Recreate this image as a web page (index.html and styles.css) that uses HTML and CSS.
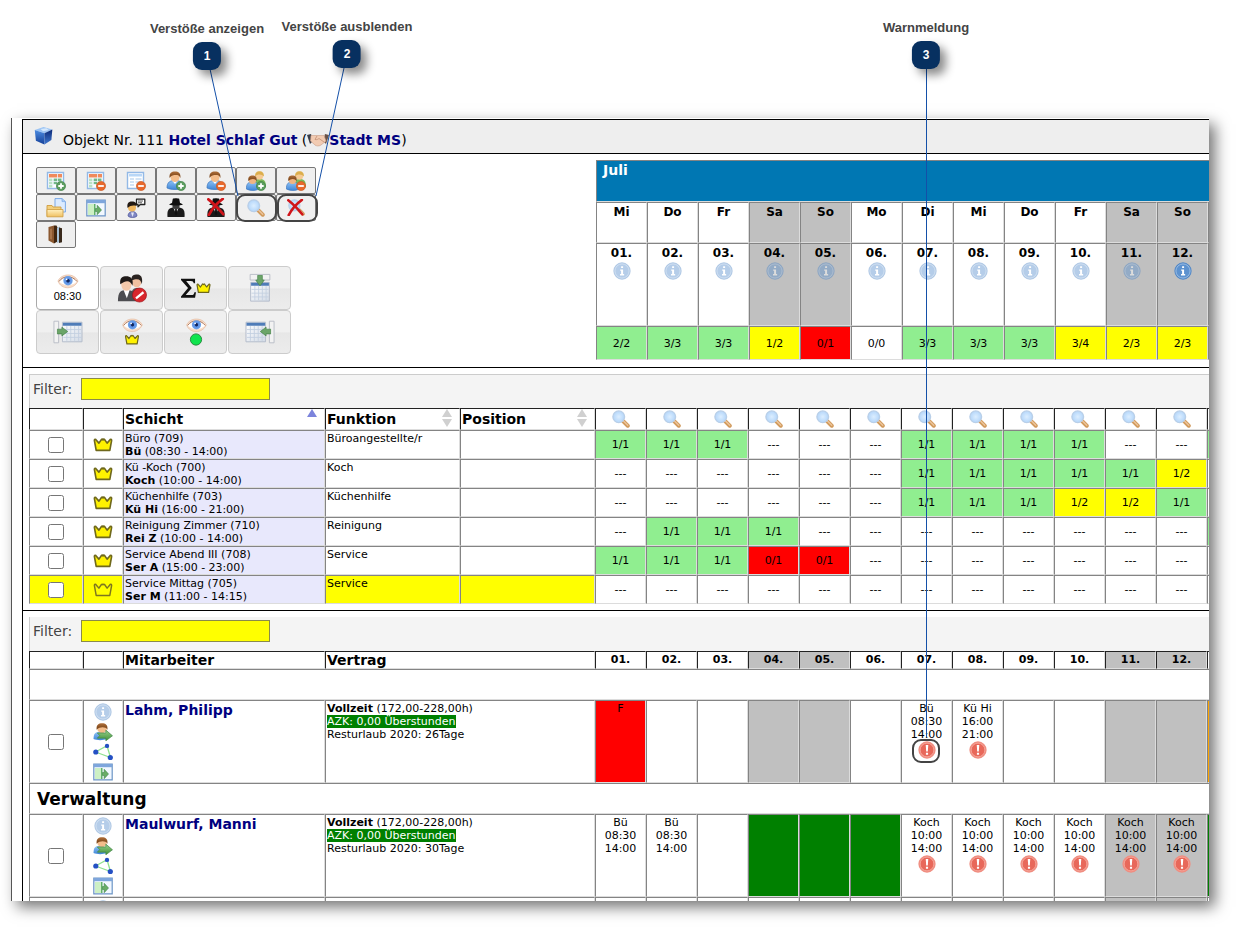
FILE: index.html
```html
<!DOCTYPE html>
<html lang="de">
<head>
<meta charset="utf-8">
<title>Dienstplan – Hotel Schlaf Gut</title>
<link rel="stylesheet" href="styles.css">
</head>
<body>
<svg class="defs" aria-hidden="true">
  <defs>
    <linearGradient id="g-blue" x1="0" y1="0" x2="0" y2="1"><stop offset="0" stop-color="#8fc2f5"/><stop offset="1" stop-color="#3f86d8"/></linearGradient>
    <linearGradient id="g-green" x1="0" y1="0" x2="0" y2="1"><stop offset="0" stop-color="#9ad18c"/><stop offset="1" stop-color="#3f9038"/></linearGradient>
    <linearGradient id="g-hair" x1="0" y1="0" x2="0" y2="1"><stop offset="0" stop-color="#b0703a"/><stop offset="1" stop-color="#6e3b12"/></linearGradient>
    <linearGradient id="g-folder" x1="0" y1="0" x2="0" y2="1"><stop offset="0" stop-color="#fff0c0"/><stop offset="1" stop-color="#f0c060"/></linearGradient>
    <linearGradient id="g-cube-l" x1="0" y1="0" x2="0" y2="1"><stop offset="0" stop-color="#4c8be0"/><stop offset="1" stop-color="#143f98"/></linearGradient>
    <linearGradient id="g-cube-r" x1="0" y1="0" x2="0" y2="1"><stop offset="0" stop-color="#0d2a78"/><stop offset="1" stop-color="#3f78d0"/></linearGradient>
    <radialGradient id="g-lens"><stop offset="0" stop-color="#dceeff"/><stop offset="1" stop-color="#b4d6fa"/></radialGradient>
    <radialGradient id="g-iris"><stop offset="0" stop-color="#0e1f4c"/><stop offset=".3" stop-color="#16306e"/><stop offset=".45" stop-color="#5b8fe4"/><stop offset="1" stop-color="#6fa4ea"/></radialGradient>
    <linearGradient id="g-sheet" x1="0" y1="0" x2="1" y2="1"><stop offset="0" stop-color="#fff"/><stop offset="1" stop-color="#d3dbe6"/></linearGradient>
  </defs>
  <symbol id="plus" viewBox="0 0 10 10"><circle cx="5" cy="5" r="4.6" fill="#5c9e60" stroke="#3c7d42" stroke-width=".6"/><path d="M5 2.300v5.400M2.300 5h5.400" stroke="#fff" stroke-width="1.800"/></symbol>
  <symbol id="minus" viewBox="0 0 10 10"><circle cx="5" cy="5" r="4.6" fill="#e8682c" stroke="#c8581f" stroke-width=".6"/><path d="M2.200 5h5.600" stroke="#fff" stroke-width="1.800"/></symbol>
  <symbol id="cal" viewBox="0 0 20 20"><path d="M1.500 1.500h16v16h-16z" fill="#fff" stroke="#93b9e6" stroke-width="1.400"/><path d="M3 3h13v3.500H3z" fill="#f08a5c"/><path d="M3 7.500h3.500v9H3z" fill="#b9e2c4"/><path d="M7.500 7.500h8v6h-8z" fill="#74b88a"/><path d="M3 10.500h13M3 13.500h13M7 7v10M11.500 3v14" stroke="#eef5fc" stroke-width=".8"/></symbol>
  <symbol id="cal2" viewBox="0 0 20 20"><path d="M1.500 1.500h16v16h-16z" fill="#fff" stroke="#93b9e6" stroke-width="1.400"/><path d="M3 3h13v2.500H3z" fill="#b9d7f7"/><path d="M4 8h4M4 11h4M4 14h4M9.500 8h6M9.500 11h6" stroke="#a6c8ec" stroke-width="1.200"/></symbol>
  <symbol id="user" viewBox="0 0 20 20"><path d="M1 17c0-6 3-7.500 8-7.500s8 1.500 8 7.500c-4 2-12 2-16 0z" fill="url(#g-blue)" stroke="#3a74bb" stroke-width=".7"/><path d="M6.500 10L9 13l2.500-3z" fill="#fff"/><ellipse cx="9" cy="6.500" rx="4.400" ry="4.500" fill="#f4bd8b"/><path d="M3.600 7C3 2 5.500.4 9 .4S15 2 14.400 7C13.400 4.500 12 4 10 4 7.500 4 5.600 4 3.600 7z" fill="url(#g-hair)"/></symbol>
  <symbol id="users" viewBox="0 0 20 20"><path d="M8 15c0-6 2-7 6-7s6 2 6 8c-3 2-9 2-12-1z" fill="#79b95a"/><circle cx="13.500" cy="5" r="3.700" fill="#f6ca93"/><path d="M9 5.500C9 1.500 11 .2 13.500.2S18 1.500 18 5.500c-2-2-6-3-9 0z" fill="#dcae4c"/><path d="M.3 18c0-6 2.400-7 6.200-7s6.200 1 6.200 7c-3 2-8 2-12.400 0z" fill="url(#g-blue)" stroke="#3a74bb" stroke-width=".6"/><circle cx="6.500" cy="9.500" r="3.600" fill="#f0b482"/><path d="M2.300 10c-.4-4.500 1.500-5.600 4.200-5.600s4.600 1.100 4.200 5.600c-1.800-2.800-5.800-2.800-8.400 0z" fill="url(#g-hair)"/></symbol>
  <symbol id="folder" viewBox="0 0 20 20"><path d="M9 .6h7l3.400 3V14H9z" fill="#dcebff" stroke="#6fa2e4" stroke-width=".9"/><path d="M16 .6v3h3.400" fill="#a9cbf5" stroke="#6fa2e4" stroke-width=".6"/><path d="M1 18.500V7.500h5l1 1.500h8v3" fill="#f3cf7c" stroke="#cf9c3e" stroke-width=".9"/><path d="M1 18.800V11.500h16v7.300z" fill="url(#g-folder)" stroke="#d3a348" stroke-width=".9"/></symbol>
  <symbol id="door" viewBox="0 0 20 18"><path d="M.8 1.200h18.400v15.600H.8z" fill="#f2f8ff" stroke="#6c95c6" stroke-width="1.200"/><path d="M.8 1h18.400v3.200H.8z" fill="#7ea6dc"/><path d="M2 5h6v11H2z" fill="#cdf0c4"/><path d="M8 5h1.500v11H8z" fill="#63b06a"/><path d="M9.500 9.500h1.700V6.300l4.300 4.700-4.300 4.700v-3.200H9.500z" fill="#69ad66" stroke="#3c8444" stroke-width=".6"/></symbol>
  <symbol id="talk" viewBox="0 0 20 20"><path d="M10.500 1.200h8.300v5.300h-4.500l-2.300 2.300V6.500h-1.500z" fill="#fff" stroke="#222" stroke-width="1.300" stroke-linejoin="round"/><path d="M12 3h5M12 4.800h4" stroke="#444" stroke-width=".9"/><path d="M2 18c0-6 9-6 9 0-2 2-7 2-9 0z" fill="#8088c4" stroke="#4a5298" stroke-width=".7"/><path d="M5 14.500l1.500 4.500 1.500-4.500z" fill="#e6e8f8"/><circle cx="6" cy="9.500" r="4" fill="#f0b860"/><path d="M1.600 10C.6 5 3 3.600 6 3.600c3.300 0 5 1.600 4.500 4.400C7 7 4.500 7.500 1.600 10z" fill="#231a14"/></symbol>
  <symbol id="spy" viewBox="0 0 20 20"><path d="M1.500 19c-.5-6 .5-8.500 5-9.500h7c4.500 1 5.500 3.500 5 9.500z" fill="#1b1b1b"/><path d="M7.500 10l2.500 6 2.500-6z" fill="#ddd"/><path d="M9.200 11h1.600l.4 5-1.200 1.500L8.800 16z" fill="#111"/><path d="M6.500 5.500h7V9c-1 3-6 3-7 0z" fill="#3c3c3c"/><path d="M3 6.500C5 5.300 6 5 6 5l.8-4.200c1-.8 5.400-.8 6.400 0L14 5s1 .3 3 1.500c-3 1.400-11 1.400-14 0z" fill="#101010"/></symbol>
  <symbol id="cross" viewBox="0 0 20 20"><path d="M1.500 1.500C6 5 13 12 18 18M17.500 1C12 5 5 13 2 19" stroke="#d0141a" stroke-width="3" fill="none" stroke-linecap="round"/></symbol>
  <symbol id="mag" viewBox="0 0 20 20"><path d="M12.500 12.500l5 5" stroke="#d19a5c" stroke-width="4.400" stroke-linecap="round"/><path d="M12.500 12l5 5" stroke="#ecc49a" stroke-width="1.600" stroke-linecap="round"/><circle cx="7.500" cy="7.500" r="6.500" fill="url(#g-lens)" stroke="#b9cfe8" stroke-width="1.500"/></symbol>
  <symbol id="book" viewBox="0 0 20 20"><path d="M2.500 2l5.500-1.500v18l-5.500-3z" fill="#8b5830"/><path d="M8 .5h2.500l1 2v14L8 18.500z" fill="#41260f"/><path d="M11 3l3-1.500V17l-3 1z" fill="#a9c3d8"/><path d="M13 2.500l3 .8v14L13 18z" fill="#3a2a1c"/><path d="M4 4l2-.5v11L4 14z" fill="#a8744a"/></symbol>
  <symbol id="eye" viewBox="0 0 22 16"><path d="M1 8C4 .5 17-.5 21 8c-4 9-17 9-20 0z" fill="#f8ddca" stroke="#e6bfa6" stroke-width=".8"/><path d="M2 8.500C6 2.500 15 2 20 8.500c-5 5-13 5-18 0z" fill="#fff"/><path d="M2 8.500C6 2.500 15 2 20 8.500" fill="none" stroke="#a9775c" stroke-width="1"/><circle cx="11" cy="7.800" r="4.700" fill="url(#g-iris)"/><circle cx="9.600" cy="6.300" r=".9" fill="#fff"/></symbol>
  <symbol id="crown" viewBox="0 0 22 16"><path d="M3.500 14.500L1.500 3.500c0-1.500 1.500-1.500 2-.5l3 3.500 2.800-4c.5-.6 1-.6 1.700.5.700-1.100 1.200-1.100 1.700-.5l2.800 4 3-3.500c.5-1 2-1 2 .5l-2 11z" fill="#fff200" stroke="#6f681c" stroke-width="1.800" stroke-linejoin="round"/></symbol>
  <symbol id="crown-line" viewBox="0 0 22 16"><path d="M3.500 14.500L1.500 3.500c0-1.500 1.500-1.500 2-.5l3 3.500 2.800-4c.5-.6 1-.6 1.700.5.700-1.100 1.200-1.100 1.700-.5l2.800 4 3-3.500c.5-1 2-1 2 .5l-2 11z" fill="#ff0" stroke="#7d7620" stroke-width="1.600" stroke-linejoin="round"/></symbol>
  <symbol id="info" viewBox="0 0 20 20"><circle cx="10" cy="10" r="9.600" fill="#4f86c6"/><circle cx="10" cy="10" r="7.900" fill="#5d92cf" stroke="#a9c7e8" stroke-width=".9"/><path d="M9 4.600h2.200v2.200H9zM8 8.200h3.200v5.200h1.200V15H7.800v-1.600H9V9.800H8z" fill="#fff"/></symbol>
  <symbol id="warn" viewBox="0 0 20 20"><circle cx="10" cy="10" r="9.600" fill="#f08d80"/><circle cx="10" cy="10" r="7.600" fill="#e8685a" stroke="#f5aa9e" stroke-width=".9"/><path d="M8.600 4.500h2.800l-.5 7.300H9.100zM8.800 13h2.400v2.300H8.800z" fill="#fff"/></symbol>
  <symbol id="userarrow" viewBox="0 0 20 19"><path d="M0 17c0-6 2-7.500 6-7.500s8 1.500 8 7.500c-4 1.500-10 1.500-14 0z" fill="url(#g-blue)"/><ellipse cx="9" cy="6" rx="5" ry="4.700" fill="#f4bd8b"/><path d="M3.300 7C2.800 2 5.300.3 9 .3S15.200 2 14.700 7C13 4 7 3.600 3.300 7z" fill="url(#g-hair)"/><path d="M4 10.500h9V7.500l7 6-7 5.300V16H4l2.500-2.700z" fill="url(#g-green)" stroke="#3c8444" stroke-width=".7"/></symbol>
  <symbol id="net" viewBox="0 0 20 17"><path d="M2.500 8.500L14 2.200 17.500 14z" fill="none" stroke="#8fe08f" stroke-width="1.300"/><circle cx="2.800" cy="8.500" r="2.600" fill="#2450c4"/><circle cx="14" cy="2.400" r="2.200" fill="#2450c4"/><circle cx="17.300" cy="14" r="2.600" fill="#2450c4"/></symbol>
  <symbol id="sheet" viewBox="0 0 22 22"><path d="M1 1h20v20H1z" fill="url(#g-sheet)" stroke="#b4bccb"/><path d="M1.500 1.500h19v3h-19z" fill="#4f7cb8"/><path d="M2 8.500h18M2 12.500h18M2 16.500h18M5.500 5v15M9.500 5v15M13.500 5v15M17.500 5v15" stroke="#c3cfe0" stroke-width=".9"/></symbol>
  <symbol id="arrow" viewBox="0 0 12 10"><path d="M.5 2.500h5V.3L11.700 5l-6.200 4.700V7.500h-5z" fill="#6ba568" stroke="#44804a" stroke-width=".7"/></symbol>
</svg>

<main class="figure">
  <section class="shot">
    <div class="frame">
      <header class="title">
        <svg class="cube" viewBox="0 0 20 20"><path d="M.8 4.300L10 1l9.300 2.800L11 7.500z" fill="#9cc4f4"/><path d="M.8 4.300L11 7.500v12L2 15.500z" fill="url(#g-cube-l)"/><path d="M11 7.500l8.300-3.700-1 11L11 19.500z" fill="url(#g-cube-r)"/><path d="M7 3.200l6-.8 2.500 1.800-6 1.200z" fill="#d5e8fc"/></svg>
        <h1>Objekt Nr. 111 <a href="#objekt">Hotel Schlaf Gut</a> (<svg class="shake" viewBox="0 0 22 14"><path d="M0 2l4-1 2 7-3 3z" fill="#3a3f4a"/><path d="M22 2l-4-1-2 7 3 3z" fill="#6b5348"/><path d="M4 2.500h13l2 5.500-5 4c-2 1.500-5 1-6 0L3.500 8z" fill="#f2cbb2" stroke="#c99c84" stroke-width=".6"/><path d="M10 3L8 6.500c2 .6 3-.5 4-1l5 3.500" fill="none" stroke="#c08e74" stroke-width=".8"/></svg><a href="#mandant">Stadt MS</a>)</h1>
      </header>

      <section class="panel top">
        <div class="tools">
          <div class="small">
            <button aria-label="Kalender hinzufügen"><svg viewBox="0 0 20 20"><use href="#cal"/><use href="#plus" x="10" y="10" width="10" height="10"/></svg></button>
            <button aria-label="Kalender entfernen"><svg viewBox="0 0 20 20"><use href="#cal"/><use href="#minus" x="10" y="10" width="10" height="10"/></svg></button>
            <button aria-label="Zeile entfernen"><svg viewBox="0 0 20 20"><use href="#cal2"/><use href="#minus" x="10" y="10" width="10" height="10"/></svg></button>
            <button aria-label="Mitarbeiter hinzufügen"><svg viewBox="0 0 20 20"><use href="#user"/><use href="#plus" x="10" y="10" width="10" height="10"/></svg></button>
            <button aria-label="Mitarbeiter entfernen"><svg viewBox="0 0 20 20"><use href="#user"/><use href="#minus" x="10" y="10" width="10" height="10"/></svg></button>
            <button aria-label="Gruppe hinzufügen"><svg viewBox="0 0 20 20"><use href="#users"/><use href="#plus" x="10" y="10" width="10" height="10"/></svg></button>
            <button aria-label="Gruppe entfernen"><svg viewBox="0 0 20 20"><use href="#users"/><use href="#minus" x="10" y="10" width="10" height="10"/></svg></button>
            <button aria-label="Ordner"><svg viewBox="0 0 20 20"><use href="#folder"/></svg></button>
            <button aria-label="Öffnen"><svg viewBox="0 0 20 20"><use href="#door" y="1" width="20" height="18"/></svg></button>
            <button aria-label="Nachricht"><svg viewBox="0 0 20 20"><use href="#talk"/></svg></button>
            <button aria-label="Agent"><svg viewBox="0 0 20 20"><use href="#spy"/></svg></button>
            <button aria-label="Agent entfernen"><svg viewBox="0 0 20 20"><use href="#spy"/><use href="#cross" x="1" width="18" height="18"/></svg></button>
            <button aria-label="Verstöße anzeigen"><svg viewBox="0 0 20 20"><use href="#mag" x="1" y="1" width="18" height="18"/></svg></button>
            <button aria-label="Verstöße ausblenden"><svg viewBox="0 0 20 20"><use href="#mag" x="2" y="1" width="17" height="17"/><use href="#cross" x="1" y="1" width="17" height="17"/></svg></button>
            <button aria-label="Buch"><svg viewBox="0 0 20 20"><use href="#book"/></svg></button>
          </div>
          <div class="big">
            <button class="on"><svg class="eye" viewBox="0 0 22 16"><use href="#eye"/></svg>08:30</button>
            <button aria-label="Personen sperren"><svg viewBox="0 0 32 32"><path d="M14 27c1-10 4-11 8-11s8 2 8 8z" fill="#5a5a5c"/><ellipse cx="21" cy="9" rx="5" ry="6.500" fill="#f0c0a0"/><path d="M15.500 8C15 2 18 1.500 21.500 1.500S28 4 26.500 12c-1-5-4-7-11-4z" fill="#2a2320"/><path d="M1 30c0-10 3-12 9-12s11 2 11 12z" fill="#4c4c50"/><path d="M7 18l3.500 9 3-9z" fill="#fff"/><ellipse cx="10" cy="12" rx="5.500" ry="7" fill="#f3c8aa"/><path d="M3.500 12C2.500 5 6 3.500 10 3.500s8 2 6.500 10c-2-5-6-7-13-1.500z" fill="#1f1a18"/><circle cx="24" cy="23.500" r="7.500" fill="#d8262c" stroke="#9c1218" stroke-width=".7"/><path d="M19.500 26l8-6.500 1.500 2-8 6.500z" fill="#fff"/></svg></button>
            <button aria-label="Summe"><svg viewBox="0 0 32 32"><path d="M0 6h15v5h-1.500c-.3-1.800-1-2.500-3-2.500H5.500L11.500 16 5 23.500h6.500c1.600 0 2.400-.9 2.800-3H16L15 26.500H0V25l7.500-9L0 7.500z" fill="#111"/><use href="#crown" x="16" y="10" width="16" height="12"/></svg></button>
            <button aria-label="Tabelle oben"><svg viewBox="0 0 32 32"><use href="#sheet" x="5" y="9" width="22" height="22"/><path d="M5.500 1.500h21v6h-21z" fill="#f2f2f2" stroke="#b9bdc6"/><g transform="rotate(90 16 8)"><use href="#arrow" x="10" y="3" width="12" height="10"/></g></svg></button>
            <button aria-label="Tabelle links"><svg viewBox="0 0 32 32"><use href="#sheet" x="9" y="4" width="23" height="24"/><path d="M1 4.500h5v23H1z" fill="#f2f2f2" stroke="#b9bdc6"/><use href="#arrow" x="4" y="10" width="12" height="11"/></svg></button>
            <button aria-label="Kronen anzeigen"><svg viewBox="0 0 32 32"><use href="#eye" x="5" y="0" width="23" height="17"/><use href="#crown" x="8" y="18" width="16" height="12"/></svg></button>
            <button aria-label="Status anzeigen"><svg viewBox="0 0 32 32"><use href="#eye" x="5" y="0" width="23" height="17"/><circle cx="16" cy="24" r="6" fill="#0fe44d" stroke="#26853c"/></svg></button>
            <button aria-label="Tabelle rechts"><svg viewBox="0 0 32 32"><use href="#sheet" x="0" y="4" width="23" height="24"/><path d="M26 4.500h5v23h-5z" fill="#f2f2f2" stroke="#b9bdc6"/><g transform="rotate(180 22 16)"><use href="#arrow" x="16" y="11" width="12" height="11"/></g></svg></button>
          </div>
        </div>
        <table class="grid calendar">
          <colgroup><col class="day" span="13"></colgroup>
          <tr class="month"><th colspan="13">Juli</th></tr>
          <tr class="weekday"><th>Mi</th><th>Do</th><th>Fr</th><th class="we">Sa</th><th class="we">So</th><th>Mo</th><th>Di</th><th>Mi</th><th>Do</th><th>Fr</th><th class="we">Sa</th><th class="we">So</th><th></th></tr>
          <tr class="date"><th>01.<svg class="i18 dim"><use href="#info"/></svg></th><th>02.<svg class="i18 dim"><use href="#info"/></svg></th><th>03.<svg class="i18 dim"><use href="#info"/></svg></th><th class="we">04.<svg class="i18 dim"><use href="#info"/></svg></th><th class="we">05.<svg class="i18 dim"><use href="#info"/></svg></th><th>06.<svg class="i18 dim"><use href="#info"/></svg></th><th>07.<svg class="i18 dim"><use href="#info"/></svg></th><th>08.<svg class="i18 dim"><use href="#info"/></svg></th><th>09.<svg class="i18 dim"><use href="#info"/></svg></th><th>10.<svg class="i18 dim"><use href="#info"/></svg></th><th class="we">11.<svg class="i18 dim"><use href="#info"/></svg></th><th class="we">12.<svg class="i18"><use href="#info"/></svg></th><th></th></tr>
          <tr class="sum"><td class="ok">2/2</td><td class="ok">3/3</td><td class="ok">3/3</td><td class="part">1/2</td><td class="none">0/1</td><td>0/0</td><td class="ok">3/3</td><td class="ok">3/3</td><td class="ok">3/3</td><td class="part">3/4</td><td class="part">2/3</td><td class="part">2/3</td><td></td></tr>
        </table>
      </section>

      <section class="panel">
        <div class="filter lined"><label for="f1">Filter:</label><input id="f1" type="text"></div>
        <table class="grid shifts">
          <colgroup><col class="c-check"><col class="c-icon"><col class="c-name"><col class="c-half"><col class="c-half"><col class="day" span="13"></colgroup>
          <tr class="head"><th></th><th></th>
            <th><div class="sort">Schicht<svg class="asc" viewBox="0 0 10 18"><path d="M5 0l5 8H0z" fill="#7c84dc"/></svg></div></th>
            <th><div class="sort">Funktion<svg viewBox="0 0 10 18"><path d="M5 0l5 8H0zM5 18l5-8H0z" fill="#d0d0d0"/></svg></div></th>
            <th><div class="sort">Position<svg viewBox="0 0 10 18"><path d="M5 0l5 8H0zM5 18l5-8H0z" fill="#d0d0d0"/></svg></div></th>
            <th><svg class="i18"><use href="#mag"/></svg></th><th><svg class="i18"><use href="#mag"/></svg></th><th><svg class="i18"><use href="#mag"/></svg></th><th><svg class="i18"><use href="#mag"/></svg></th><th><svg class="i18"><use href="#mag"/></svg></th><th><svg class="i18"><use href="#mag"/></svg></th><th><svg class="i18"><use href="#mag"/></svg></th><th><svg class="i18"><use href="#mag"/></svg></th><th><svg class="i18"><use href="#mag"/></svg></th><th><svg class="i18"><use href="#mag"/></svg></th><th><svg class="i18"><use href="#mag"/></svg></th><th><svg class="i18"><use href="#mag"/></svg></th><th></th></tr>
          <tr><td><input type="checkbox" aria-label="Büro"></td><td><svg class="crown"><use href="#crown"/></svg></td><td class="txt name">Büro (709)<br><b>Bü</b> (08:30 - 14:00)</td><td class="txt">Büroangestellte/r</td><td class="txt"></td><td class="ok">1/1</td><td class="ok">1/1</td><td class="ok">1/1</td><td>---</td><td>---</td><td>---</td><td class="ok">1/1</td><td class="ok">1/1</td><td class="ok">1/1</td><td class="ok">1/1</td><td>---</td><td>---</td><td class="ok"></td></tr>
          <tr><td><input type="checkbox" aria-label="Kü -Koch"></td><td><svg class="crown"><use href="#crown"/></svg></td><td class="txt name">Kü -Koch (700)<br><b>Koch</b> (10:00 - 14:00)</td><td class="txt">Koch</td><td class="txt"></td><td>---</td><td>---</td><td>---</td><td>---</td><td>---</td><td>---</td><td class="ok">1/1</td><td class="ok">1/1</td><td class="ok">1/1</td><td class="ok">1/1</td><td class="ok">1/1</td><td class="part">1/2</td><td></td></tr>
          <tr><td><input type="checkbox" aria-label="Küchenhilfe"></td><td><svg class="crown"><use href="#crown"/></svg></td><td class="txt name">Küchenhilfe (703)<br><b>Kü Hi</b> (16:00 - 21:00)</td><td class="txt">Küchenhilfe</td><td class="txt"></td><td>---</td><td>---</td><td>---</td><td>---</td><td>---</td><td>---</td><td class="ok">1/1</td><td class="ok">1/1</td><td class="ok">1/1</td><td class="part">1/2</td><td class="part">1/2</td><td class="ok">1/1</td><td></td></tr>
          <tr><td><input type="checkbox" aria-label="Reinigung Zimmer"></td><td><svg class="crown"><use href="#crown"/></svg></td><td class="txt name">Reinigung Zimmer (710)<br><b>Rei Z</b> (10:00 - 14:00)</td><td class="txt">Reinigung</td><td class="txt"></td><td>---</td><td class="ok">1/1</td><td class="ok">1/1</td><td class="ok">1/1</td><td>---</td><td>---</td><td>---</td><td>---</td><td>---</td><td>---</td><td>---</td><td>---</td><td class="ok"></td></tr>
          <tr><td><input type="checkbox" aria-label="Service Abend III"></td><td><svg class="crown"><use href="#crown"/></svg></td><td class="txt name">Service Abend III (708)<br><b>Ser A</b> (15:00 - 23:00)</td><td class="txt">Service</td><td class="txt"></td><td class="ok">1/1</td><td class="ok">1/1</td><td class="ok">1/1</td><td class="none">0/1</td><td class="none">0/1</td><td>---</td><td>---</td><td>---</td><td>---</td><td>---</td><td>---</td><td>---</td><td></td></tr>
          <tr><td class="part"><input type="checkbox" aria-label="Service Mittag"></td><td class="part"><svg class="crown"><use href="#crown-line"/></svg></td><td class="txt name">Service Mittag (705)<br><b>Ser M</b> (11:00 - 14:15)</td><td class="txt part">Service</td><td class="txt part"></td><td>---</td><td>---</td><td>---</td><td>---</td><td>---</td><td>---</td><td>---</td><td>---</td><td>---</td><td>---</td><td>---</td><td>---</td><td></td></tr>
        </table>
      </section>

      <section class="panel">
        <div class="filter"><label for="f2">Filter:</label><input id="f2" type="text"></div>
        <table class="grid staff">
          <colgroup><col class="c-check"><col class="c-icon"><col class="c-name"><col class="c-wide"><col class="day" span="13"></colgroup>
          <tr class="head"><th></th><th></th><th class="left">Mitarbeiter</th><th class="left">Vertrag</th><th class="num">01.</th><th class="num">02.</th><th class="num">03.</th><th class="num we">04.</th><th class="num we">05.</th><th class="num">06.</th><th class="num">07.</th><th class="num">08.</th><th class="num">09.</th><th class="num">10.</th><th class="num we">11.</th><th class="num we">12.</th><th></th></tr>
          <tr class="group"><th colspan="17"></th></tr>
          <tr class="person"><td class="mid"><input type="checkbox" aria-label="Lahm, Philipp"></td>
            <td><div class="icons"><svg class="i18 dim"><use href="#info"/></svg><svg><use href="#userarrow"/></svg><svg><use href="#net"/></svg><svg><use href="#door"/></svg></div></td>
            <td class="txt who"><a href="#lahm">Lahm, Philipp</a></td>
            <td class="txt"><b>Vollzeit</b> (172,00-228,00h)<br><mark>AZK: 0,00 Überstunden</mark><br>Resturlaub 2020: 26Tage</td>
            <td class="none">F</td><td></td><td></td><td class="we"></td><td class="we"></td><td></td>
            <td>Bü<br>08:30<br>14:00<svg class="i18"><use href="#warn"/></svg></td><td>Kü Hi<br>16:00<br>21:00<svg class="i18"><use href="#warn"/></svg></td><td></td><td></td><td class="we"></td><td class="we"></td><td class="orange"></td></tr>
          <tr class="group"><th colspan="17">Verwaltung</th></tr>
          <tr class="person"><td class="mid"><input type="checkbox" aria-label="Maulwurf, Manni"></td>
            <td><div class="icons"><svg class="i18 dim"><use href="#info"/></svg><svg><use href="#userarrow"/></svg><svg><use href="#net"/></svg><svg><use href="#door"/></svg></div></td>
            <td class="txt who"><a href="#maulwurf">Maulwurf, Manni</a></td>
            <td class="txt"><b>Vollzeit</b> (172,00-228,00h)<br><mark>AZK: 0,00 Überstunden</mark><br>Resturlaub 2020: 30Tage</td>
            <td>Bü<br>08:30<br>14:00</td><td>Bü<br>08:30<br>14:00</td><td></td><td class="free"></td><td class="free"></td><td class="free"></td>
            <td>Koch<br>10:00<br>14:00<svg class="i18"><use href="#warn"/></svg></td><td>Koch<br>10:00<br>14:00<svg class="i18"><use href="#warn"/></svg></td><td>Koch<br>10:00<br>14:00<svg class="i18"><use href="#warn"/></svg></td><td>Koch<br>10:00<br>14:00<svg class="i18"><use href="#warn"/></svg></td><td class="we">Koch<br>10:00<br>14:00<svg class="i18"><use href="#warn"/></svg></td><td class="we">Koch<br>10:00<br>14:00<svg class="i18"><use href="#warn"/></svg></td><td class="free"></td></tr>
          <tr class="person"><td></td><td><div class="icons"><svg class="i18 dim"><use href="#info"/></svg></div></td><td></td><td class="txt"><b>Vollzeit</b> (172,00-228,00h)</td><td></td><td></td><td></td><td></td><td></td><td></td><td></td><td></td><td></td><td></td><td class="we"></td><td class="we"></td><td></td></tr>
        </table>
      </section>
    </div>
  </section>

  <svg class="leaders" aria-hidden="true"><path d="M210 69L238 196M344 68L316 196" /><path d="M926.500 69V737"/></svg>
  <i class="ring ring1"></i><i class="ring ring2"></i><i class="ring ring3"></i>
  <div class="callout callout1">Verstöße anzeigen<span>1</span></div>
  <div class="callout callout2">Verstöße ausblenden<span>2</span></div>
  <div class="callout callout3">Warnmeldung<span>3</span></div>
</main>
</body>
</html>
```

FILE: styles.css
```css
* { box-sizing: border-box; }
body {
  margin: 0;
  background: #fff;
  color: #000;
  font: 11px/13px "DejaVu Sans", Verdana, sans-serif;
}
.defs { position: absolute; width: 0; height: 0; }
a { color: #000080; font-weight: bold; text-decoration: none; }
button { font: inherit; color: inherit; padding: 0; margin: 0; }

.figure {
  position: relative;
  display: flex;
  flex-direction: column;
  height: 100vh;
  padding: 118px 27px 26px 11px;
  overflow: hidden;
}
.shot {
  flex: 1;
  min-height: 0;
  padding: 1px 0 0 10px;
  border-left: 1px solid #555;
  background: #fff;
  box-shadow: 6px 6px 14px rgba(0, 0, 0, .55);
}
.frame {
  height: 100%;
  overflow: hidden;
  border: solid #000;
  border-width: 1px 0 0 1px;
}

/* Title bar */
.title {
  display: flex;
  gap: 10px;
  height: 34px;
  padding: 6px 11px 0;
  background: #eee;
  border-bottom: 1px solid #000;
}
.title h1 { margin: 0; padding-top: 5px; font-size: 14px; line-height: 18px; font-weight: normal; }
.cube { width: 19px; height: 19px; }
.shake { width: 22px; height: 14px; vertical-align: -2px; }

.panel { padding: 6px 0 6px 6px; border-bottom: 1px solid #000; }
.top { display: flex; padding: 6px 0 7px 13px; }

/* Toolbars */
.tools { flex: none; width: 560px; padding-top: 7px; }
.small { display: grid; grid-template-columns: repeat(7, 40px); grid-auto-rows: 27px; }
.small button {
  display: grid;
  place-items: center;
  border: 1px solid #777;
  border-radius: 2px;
  background: #efefef;
}
.small svg { width: 20px; height: 20px; }
.big {
  display: grid;
  grid-template-columns: repeat(4, 63px);
  grid-auto-rows: 44px;
  column-gap: 1px;
  margin-top: 18px;
}
.big button {
  display: flex;
  flex-direction: column;
  align-items: center;
  justify-content: center;
  border: 1px solid #ccc;
  border-radius: 4px;
  background: linear-gradient(#f0f0f0 50%, #e7e7e7 52%, #ececec);
  font: 11px/14px "Liberation Sans", Arial, sans-serif;
}
.big .on { border-color: #aaa; background: #fff; }
.big svg { width: 30px; height: 30px; }
.big .eye { width: 22px; height: 16px; }

/* Tables */
.grid { table-layout: fixed; width: 0; border-collapse: separate; border-spacing: 0; }
.grid td, .grid th {
  padding: 0;
  border: 1px solid;
  border-color: #848484 #dcdcdc #dcdcdc #848484;
  text-align: center;
  overflow: hidden;
}
.day { width: 51px; }
.c-check { width: 54px; }
.c-icon { width: 40px; }
.c-name { width: 202px; }
.c-half { width: 135px; }
.c-wide { width: 270px; }
.grid .ok { background: #90ee90; }
.grid .part { background: #ff0; }
.grid .none { background: #f00; }
.grid .we { background: #c0c0c0; }
.grid .free { background: #008000; }
.grid .orange { background: #ffa500; }
.grid .txt { padding: 1px 1px 0; text-align: left; vertical-align: top; }
.grid .name { background: #e8e8fc; }
.i18 { display: block; width: 18px; height: 18px; margin: 0 auto; }
.dim { opacity: .45; }
.crown { display: block; width: 20px; height: 15px; margin: 0 auto; }
.grid input { display: block; width: 16px; height: 16px; margin: 0 auto; }

.calendar th { vertical-align: top; font-size: 12px; line-height: 18px; }
.calendar .month th { height: 42px; padding-left: 6px; background: #0077b3; color: #fff; font-size: 14px; text-align: left; }
.weekday th { height: 41px; }
.date th { height: 83px; }
.sum td { height: 34px; }

.head th { height: 22px; border-color: #222 #ddd #ddd #222; font-size: 14px; line-height: 20px; }
.shifts td { height: 29px; line-height: 13px; }
.sort { display: flex; justify-content: space-between; padding: 0 7px 0 1px; }
.sort svg { width: 10px; height: 18px; }

.staff .head th { height: 18px; line-height: 16px; }
.staff .head .left { padding-left: 1px; text-align: left; }
.staff .head .num { font-size: 11px; vertical-align: top; }
.staff .group th { height: 31px; padding-left: 7px; font-size: 17px; line-height: 22px; text-align: left; }
.person td { height: 83px; padding-top: 1px; vertical-align: top; }
.person .mid { padding: 0; vertical-align: middle; }
.person .who { font-size: 14px; line-height: 17px; }
.icons { display: grid; justify-items: center; grid-auto-rows: 20px; align-items: center; }
.icons svg { width: 20px; height: 18px; margin: 0; }
mark { background: #008000; color: #fff; }

/* Filter bars */
.filter {
  display: flex;
  align-items: flex-start;
  gap: 9px;
  height: 34px;
  padding: 3px 0 0 3px;
  border-left: 1px solid #ccc;
  background: #f4f4f4;
  color: #444;
  font-size: 14px;
  line-height: 22px;
}
.lined { border-top: 1px solid #ccc; }
.filter input { width: 189px; height: 22px; padding: 0 2px; border: 1px solid #8a8a4a; background: #ff0; font: inherit; }

/* Annotations over the plan */
.leaders { position: absolute; top: 0; left: 0; width: 100%; height: 100%; fill: none; stroke: #1450a8; pointer-events: none; }
.ring { position: absolute; border: 2px solid #444; border-radius: 9px; }
.ring1 { left: 236px; top: 194px; width: 41px; height: 28px; }
.ring2 { left: 277px; top: 194px; width: 41px; height: 28px; }
.ring3 { left: 912px; top: 739px; width: 28px; height: 24px; }
.callout {
  position: absolute;
  display: flex;
  flex-direction: column;
  align-items: center;
  gap: 5px;
  transform: translateX(-50%);
  color: #444;
  font: bold 13px/16px "Liberation Sans", Arial, sans-serif;
  white-space: nowrap;
}
.callout span {
  width: 28px;
  border-radius: 9px;
  background: #073060;
  box-shadow: 6px 6px 10px rgba(0, 0, 0, .45);
  color: #fff;
  font-size: 12px;
  line-height: 28px;
  text-align: center;
}
.callout1 { left: 207px; top: 21px; }
.callout2 { left: 347px; top: 19px; }
.callout3 { left: 926px; top: 20px; }
```
